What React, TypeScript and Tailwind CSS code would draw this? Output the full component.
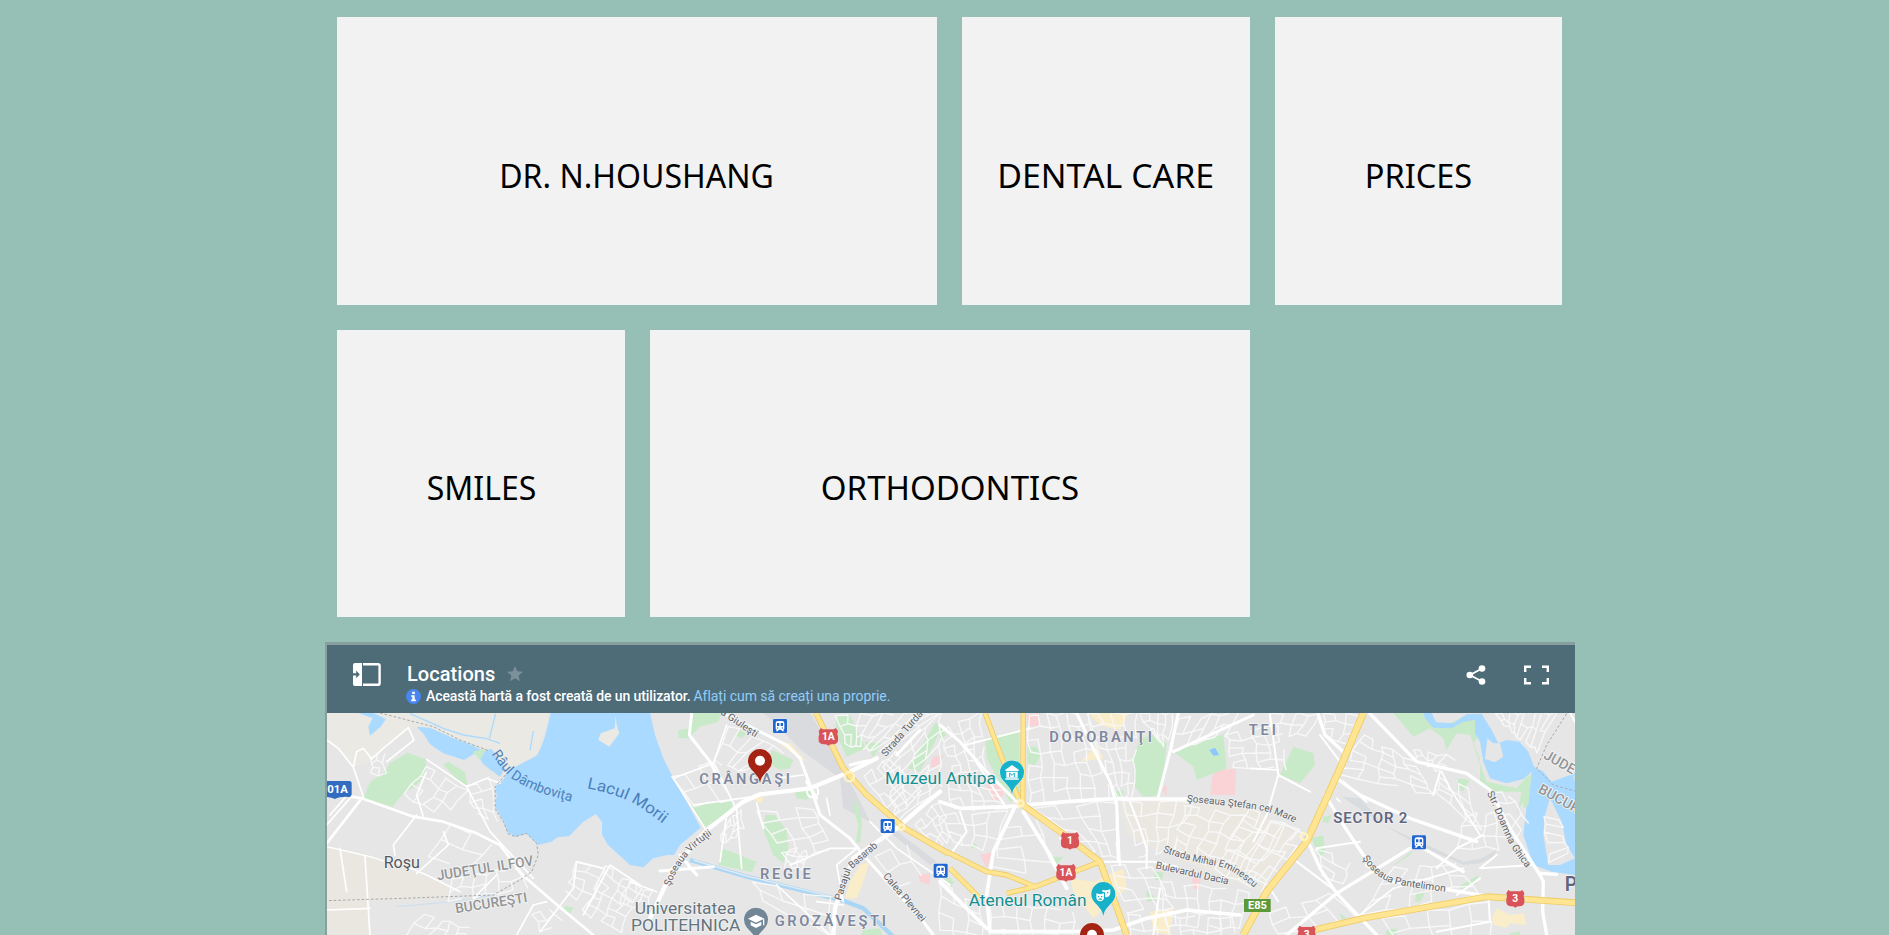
import React from "react";

type Pt = [number, number];
type Quad = [Pt, Pt, Pt, Pt];

const TILE = 930;

const cards = [
  { title: "DR. N.HOUSHANG", box: "col-span-2 h-[288px]", text: "scale-x-[0.97]" },
  { title: "DENTAL CARE", box: "h-[288px]", text: "scale-x-[1.027]" },
  { title: "PRICES", box: "h-[288px]", text: "scale-x-[0.985]" },
  { title: "SMILES", box: "h-[287px]", text: "scale-x-[0.97]" },
  { title: "ORTHODONTICS", box: "col-span-2 h-[287px]", text: "scale-x-100" },
];

/* Street grid spread over a quadrilateral: n streets one way, m the other.
   Crossings are nudged a little and some blocks are merged, as in an old town. */
function streets([a, b, c, d]: Quad, n: number, m: number): string {
  const node = (i: number, j: number): Pt => {
    const u = i / n;
    const v = j / m;
    const x = (1 - v) * (a[0] + (b[0] - a[0]) * u) + v * (d[0] + (c[0] - d[0]) * u);
    const y = (1 - v) * (a[1] + (b[1] - a[1]) * u) + v * (d[1] + (c[1] - d[1]) * u);
    return [Math.round(x + 5 * Math.sin(i * 5.3 + j * 2.1 + a[0])), Math.round(y + 5 * Math.cos(i * 3.7 + j * 4.9 + a[1]))];
  };
  let out = "";
  for (let i = 0; i <= n; i++) {
    for (let j = 0; j <= m; j++) {
      const p = node(i, j);
      if (j < m && (i * 3 + j * 5) % 7 !== 1) {
        const q = node(i, j + 1);
        out += `M${p[0]} ${p[1]}L${q[0]} ${q[1]}`;
      }
      if (i < n && (i * 5 + j * 2) % 4 !== 1) {
        const q = node(i + 1, j);
        out += `M${p[0]} ${p[1]}L${q[0]} ${q[1]}`;
      }
    }
  }
  return out;
}

const grids: { t: number; q: Quad; n: number; m: number }[] = [
  { t: 0, q: [[155, 365], [190, 358], [195, 418], [155, 418]], n: 2, m: 3 },
  { t: 0, q: [[320, 390], [440, 470], [370, 545], [255, 480]], n: 4, m: 3 },
  { t: 0, q: [[440, 455], [510, 430], [530, 560], [470, 540]], n: 2, m: 4 },
  { t: 0, q: [[390, 570], [520, 625], [450, 700], [330, 665]], n: 2, m: 2 },
  { t: 0, q: [[400, 730], [590, 700], [620, 760], [380, 800]], n: 6, m: 2 },
  { t: 0, q: [[310, 840], [450, 880], [430, 920], [260, 900]], n: 5, m: 2 },
  { t: 0, q: [[770, 680], [850, 700], [810, 810], [740, 770]], n: 2, m: 4 },
  { t: 0, q: [[860, 690], [960, 760], [900, 890], [790, 830]], n: 4, m: 6 },
  { t: 0, q: [[640, 840], [690, 820], [720, 860], [660, 890]], n: 2, m: 2 },
  { t: 1, q: [[300, 270], [460, 350], [350, 410], [250, 380]], n: 5, m: 2 },
  { t: 1, q: [[130, 430], [240, 380], [310, 495], [190, 510]], n: 3, m: 2 },
  { t: 1, q: [[290, 560], [335, 530], [340, 600], [270, 625]], n: 4, m: 3 },
  { t: 1, q: [[380, 530], [550, 520], [600, 640], [480, 690]], n: 3, m: 5 },
  { t: 1, q: [[480, 640], [530, 650], [520, 700], [460, 700]], n: 3, m: 3 },
  { t: 1, q: [[620, 240], [930, 234], [760, 350], [650, 330]], n: 9, m: 3 },
  { t: 1, q: [[760, 390], [930, 234], [930, 460], [800, 560]], n: 4, m: 9 },
  { t: 1, q: [[700, 420], [780, 370], [870, 470], [790, 550]], n: 4, m: 4 },
  { t: 1, q: [[850, 570], [930, 500], [960, 600], [930, 640]], n: 4, m: 4 },
  { t: 1, q: [[740, 660], [830, 630], [870, 720], [800, 760]], n: 2, m: 2 },
  { t: 1, q: [[370, 740], [600, 790], [600, 900], [400, 800]], n: 3, m: 2 },
  { t: 1, q: [[0, 740], [70, 770], [40, 830], [-30, 800]], n: 3, m: 3 },
  { t: 2, q: [[0, 290], [120, 234], [135, 400], [40, 420]], n: 4, m: 5 },
  { t: 2, q: [[20, 430], [180, 470], [200, 520], [40, 520]], n: 5, m: 3 },
  { t: 2, q: [[265, 240], [440, 234], [510, 490], [270, 510]], n: 6, m: 7 },
  { t: 2, q: [[440, 234], [590, 234], [580, 480], [530, 490]], n: 4, m: 7 },
  { t: 2, q: [[600, 234], [700, 234], [680, 350], [640, 300]], n: 4, m: 3 },
  { t: 2, q: [[720, 250], [900, 234], [850, 300], [690, 350]], n: 6, m: 2 },
  { t: 2, q: [[860, 300], [1010, 270], [1040, 400], [880, 400]], n: 4, m: 5 },
  { t: 2, q: [[0, 540], [200, 530], [160, 650], [40, 620]], n: 4, m: 3 },
  { t: 2, q: [[190, 580], [290, 560], [350, 720], [160, 700]], n: 2, m: 4 },
  { t: 2, q: [[280, 520], [530, 500], [530, 670], [450, 650]], n: 4, m: 4 },
  { t: 2, q: [[550, 500], [760, 500], [700, 640], [600, 670]], n: 4, m: 4 },
  { t: 2, q: [[740, 510], [1080, 580], [960, 770], [700, 640]], n: 8, m: 5 },
  { t: 2, q: [[510, 690], [640, 700], [700, 820], [560, 830]], n: 3, m: 4 },
  { t: 2, q: [[660, 740], [930, 770], [900, 880], [680, 870]], n: 7, m: 3 },
  { t: 2, q: [[560, 840], [880, 850], [880, 930], [580, 930]], n: 8, m: 2 },
  { t: 2, q: [[150, 800], [400, 830], [400, 930], [150, 930]], n: 6, m: 3 },
  { t: 2, q: [[0, 740], [120, 810], [130, 930], [0, 930]], n: 3, m: 4 },
  { t: 3, q: [[60, 234], [210, 240], [170, 300], [70, 300]], n: 4, m: 2 },
  { t: 3, q: [[220, 234], [330, 240], [290, 330], [225, 300]], n: 3, m: 3 },
  { t: 3, q: [[340, 300], [490, 380], [550, 480], [270, 420]], n: 5, m: 5 },
  { t: 3, q: [[490, 340], [610, 370], [570, 410], [500, 380]], n: 5, m: 2 },
  { t: 3, q: [[570, 430], [650, 460], [690, 590], [560, 470]], n: 3, m: 3 },
  { t: 3, q: [[650, 540], [760, 530], [790, 640], [620, 640]], n: 4, m: 3 },
  { t: 3, q: [[0, 520], [170, 600], [60, 750], [-100, 680]], n: 5, m: 4 },
  { t: 3, q: [[740, 234], [920, 234], [860, 350], [760, 270]], n: 9, m: 2 },
  { t: 3, q: [[430, 700], [620, 690], [690, 780], [330, 840]], n: 5, m: 3 },
  { t: 3, q: [[60, 830], [240, 780], [330, 850], [80, 900]], n: 4, m: 2 },
  { t: 3, q: [[200, 640], [300, 680], [280, 750], [220, 720]], n: 2, m: 3 },
  { t: 3, q: [[880, 540], [930, 560], [955, 660], [900, 680]], n: 1, m: 5 },
  { t: 3, q: [[730, 470], [780, 480], [830, 560], [790, 620]], n: 2, m: 4 },
  { t: 3, q: [[400, 850], [720, 800], [720, 910], [450, 930]], n: 5, m: 2 },
];

function Shift({ t, children }: { t: number; children: React.ReactNode }) {
  return <g transform={`translate(${t * TILE} 0)`}>{children}</g>;
}

function Land() {
  return (
    <>
      <rect x="0" y="220" width="3800" height="700" fill="#e6e6e6" />
      <Shift t={0}>
        <path fill="#ebe9e4" d="M20 234H690L650 360 560 410 520 345 400 310 280 275 200 330 150 380 100 395 20 310Z" />
        <path fill="#eae7e1" d="M20 635 150 665 210 680 290 715 385 750 380 790 150 800 150 900H20Z" />
        <path fill="#c9eac9" d="M130 490 150 440 190 415 210 385 262 353 318 373 318 412 290 450 245 480 218 515ZM370 390 385 380 435 412 442 450 428 450ZM505 405 530 390 535 410ZM735 812 760 818 750 838 728 830Z" />
        <path fill="#aadaff" d="M290 275 330 278 400 310 455 330 483 345 460 358 432 375 370 355 330 328 312 298ZM470 355 515 342 555 400 540 425 490 388ZM115 234H160L198 252 182 275 150 302 145 275 158 250Z" />
        <path fill="#c9eac9" d="M458 350 500 340 480 375Z" />
        <path fill="#aadaff" d="M692 234C684 270 672 330 650 362L562 408 552 432 527 455 530 482 525 515 552 560 562 592 588 605 620 596 655 630 695 620 712 607 748 603 790 560 828 537 846 562 846 598 862 628 930 690 970 697 1000 670 1040 660 1062 660 1080 630 1142 578 1100 500 1060 430 1030 370 1005 300 990 234Z" />
        <path fill="#ebe9e4" d="M887 242 884 280 842 295 835 315 868 335 898 295 890 270Z" />
        <g fill="none" stroke="#aadaff" strokeWidth="4">
          <path d="M270 236 370 280 430 300 500 311 540 325M527 236 508 310M640 288 630 346" />
          <path stroke="#cfe0ec" d="M230 815 400 800 520 780" />
        </g>
      </Shift>
      <Shift t={1}>
        <path fill="#d9dbdf" d="M400 234H540L640 400 720 560 640 520 630 430 520 350 420 250ZM790 580 920 680 900 690 790 600Z" />
        <path fill="#c9eac9" d="M180 234H275L265 260 210 275 175 310 145 310 145 285 175 280ZM325 285 350 295 335 310 315 300ZM425 345 490 375 480 400 450 405 415 385ZM185 512 312 495 300 530 222 578ZM405 540 435 540 470 585 475 640 460 685 430 660 402 590ZM275 640 380 680 365 712 265 690ZM490 460 550 470 530 495 500 490ZM620 240 660 240 708 340 650 365 615 290ZM705 320 755 325 730 368ZM915 265 940 270 870 410 835 400ZM678 490 696 560 690 625 678 620 685 570 670 520Z" />
        <path fill="#faedc9" d="M690 690 718 680 700 740 680 790 645 790 660 740ZM372 490 400 485 395 505 378 502ZM440 320 480 325 530 380 510 370Z" />
        <path fill="#f9d3d5" d="M910 365 940 360 920 400 900 395ZM865 720 900 715 900 750 870 740Z" />
        <path fill="none" stroke="#aad6f5" strokeWidth="13" d="M180 675 350 725 640 797 700 820 790 905" />
        <path fill="none" stroke="#e1eaf0" strokeWidth="4" d="M190 675 350 723 640 793" />
        <path fill="#c9eac9" d="M700 885 750 880 760 910 690 910ZM935 720 965 730 965 760Z" />
      </Shift>
      <Shift t={2}>
        <path fill="#ebe8e2" d="M540 500 760 490 930 520 1080 600 960 770 660 650 560 600Z" />
        <path fill="#faedc9" d="M445 234H565L540 285 480 270ZM390 730 460 740 550 700 560 760 460 850 400 770ZM630 830 700 820 690 900 640 890ZM420 380 470 330 490 370Z" />
        <path fill="#f9d3d5" d="M260 240 300 234 295 275 262 272ZM820 405 888 402 885 480 810 480ZM140 450 185 440 190 480 160 505ZM120 660 160 650 140 700ZM755 720 785 725 775 765 760 760ZM665 460 680 450 680 485Z" />
        <path fill="#c9eac9" d="M135 310 238 285 240 490 210 500 140 370ZM262 335 290 335 302 360 285 390 262 385ZM600 310 640 300 680 325 665 480 610 485 580 450 582 360ZM700 350 850 298 860 400 770 435 760 395ZM335 665 370 665 350 690 335 680ZM620 765 655 795 620 800ZM642 710 672 712 665 735 645 735ZM95 622 112 630 105 642 93 636ZM522 470 550 465 550 490 522 485ZM0 270 18 300 0 315ZM20 735 45 740 30 755Z" />
        <path fill="#8cc8ff" d="M808 345 825 338 838 360 820 362Z" />
      </Shift>
      <Shift t={3}>
        <path fill="#d9dcde" d="M275 485 330 490 400 570 500 615 640 680 690 672 740 645 730 665 690 685 640 690 500 628 410 575Z" />
        <path fill="#c9eac9" d="M90 420 130 335 190 355 195 390 150 445ZM430 234H520L560 280 610 260 650 240 690 240 690 290 670 330 710 440 800 460 835 420 850 430 800 540 815 470 730 470 690 440 690 370 660 300 620 295 590 345 580 310 540 280 490 305ZM625 430 660 435 640 468 620 465ZM220 545 245 540 235 565 218 560ZM185 610 220 600 225 655 205 665ZM430 690 490 645 480 660 430 692ZM500 770 525 775 510 800 495 800ZM625 755 685 720 680 745 640 765ZM410 885 440 880 440 910 405 910ZM270 835 290 850 275 855ZM780 895 810 890 810 910 780 910Z" />
        <path fill="#aadaff" d="M520 234H545L558 262 610 265 650 238 695 236 725 285 745 325 770 315 808 320 835 350 852 395 880 410 905 440 975 415V720L905 710 850 690 820 600 830 510 845 410 820 432 770 445 720 430 700 380 690 320 675 295 675 255 640 260 605 280 550 278 525 250Z" />
        <path fill="#e6e6e6" d="M712 310 730 325 750 325 760 365 735 382 705 372ZM885 540 900 490 935 560 950 630 975 670 930 690 895 690 880 600Z" />
        <path fill="#c9eac9" d="M810 460 845 415 835 510 822 520Z" />
        <path fill="#faedc9" d="M725 850 740 820 780 840 820 835 830 870 780 865 770 878 730 870Z" />
      </Shift>
    </>
  );
}

function Roads() {
  return (
    <>
      <g fill="none" stroke="#f8f8f8" strokeWidth="4" strokeLinecap="round">
        {grids.map((g, i) => (
          <Shift t={g.t} key={i}>
            <path d={streets(g.q, g.n, g.m)} />
          </Shift>
        ))}
      </g>
      <g fill="none" stroke="#fff" strokeLinejoin="round" strokeLinecap="round">
        <Shift t={0}>
          <path strokeWidth="5" d="M20 315 55 340 100 397 130 485M100 397 110 350 130 340 155 372 190 340 265 278 282 315 200 380M20 570 90 490M30 540 75 488M320 373 440 455 510 590 640 730M440 455 500 430 540 445M318 412 290 480 310 545M225 660 220 630 290 540M370 590 385 630 290 715M60 640 80 770M135 665 150 900M20 825 150 820M225 680 320 720 420 770M530 720 460 790M660 890 760 760 770 680 850 700M590 900 640 810 680 800M790 840 870 690 960 750" />
          <path strokeWidth="8" d="M95 485 125 490 280 545 370 560 470 595 540 630 610 722 700 800 820 900M125 490 20 625" />
          <path strokeWidth="4" d="M20 635 150 665 215 685" />
        </Shift>
        <Shift t={1}>
          <path strokeWidth="5" d="M130 430 210 400 250 385 290 270M130 430 225 580M190 510 370 485M250 380 320 525 335 700M380 505 400 580M290 540 270 680M440 430 520 420M600 540 590 490M640 800 620 690 680 640M480 690 600 640 680 640M0 740 80 770M560 800 640 810M440 750 600 900M720 560 800 640 960 750" />
          <path strokeWidth="9" d="M185 234 178 300 240 380 265 430M290 240 470 330 510 370 540 450 570 540 660 610 700 660 880 860 910 900" />
          <path strokeWidth="13" d="M60 850 130 700 225 590 340 500 390 478 540 460 660 410 740 370M610 900 615 820 670 670 800 580 880 510 930 470" />
          <path strokeWidth="9" d="M90 708 250 695M150 660 200 720M530 440 560 490M660 390 700 380 730 375M800 360 870 285" />
          <circle cx="548" cy="470" r="17" strokeWidth="6" />
        </Shift>
        <Shift t={2}>
          <path strokeWidth="6" d="M75 330 270 280M200 520 75 330M570 500 600 580 620 640 620 700M530 490 540 690M480 680 640 680 710 695M60 530 80 590 30 660M440 650 360 610M150 880 140 810M640 900 660 760" />
          <path strokeWidth="9" d="M0 270 60 320 130 400 240 510M700 350 940 240M410 234 450 320 510 440 530 510 535 680M715 234 690 350 655 485" />
          <path strokeWidth="11" d="M0 500 60 520 200 515 380 500 500 492 750 492M225 515 160 650 140 780 150 890 400 890M250 530 330 660 380 760M0 740 140 880M400 890 520 885 620 850 740 825 900 840" />
        </Shift>
        <Shift t={3}>
          <path strokeWidth="6" d="M60 240 85 420 50 540 10 620M85 420 180 470M210 300 270 380M550 480 570 410M280 440 350 500M700 600 620 640 560 700M140 680 260 770M200 640 330 620M620 780 690 730M715 780 720 860 560 890M740 660 690 700 850 690M960 234 975 260" />
          <path strokeWidth="10" d="M360 236 500 380 650 415 720 465 780 580 870 720 880 740 878 830 890 900M870 715 920 718M205 240 225 300 280 350M225 480 280 570 340 660 380 710M170 610 210 700 260 775 380 900M260 775 110 900M260 775 480 640M260 430 330 480 480 550 680 620M520 640 640 710M350 690 430 740 600 765 720 785" />
          <path strokeWidth="5" d="M0 400 85 405M85 800 60 760M330 840 430 760 640 700M270 500 260 490M575 410 600 460 690 600" />
        </Shift>
      </g>
      <g fill="none" strokeLinejoin="round">
        {[
          { c: "#eecb66", w: 0 },
          { c: "#ffe592", w: -5 },
        ].map((s) => (
          <g stroke={s.c} key={s.c}>
            <path strokeWidth={18 + s.w} d="M1488 234 1570 400 1640 480 1755 580 1885 655" />
            <path strokeWidth={16 + s.w} d="M1880 650 2000 710 2060 720 2145 755 2340 680M1890 700 1980 790M2145 755 2060 775M1995 234 2050 380 2095 490M2110 234 2108 505" />
            <path strokeWidth={20 + s.w} d="M2095 500 2220 590 2340 680 2370 760 2420 900" />
            <path strokeWidth={22 + s.w} d="M3130 234 3060 400 2960 620 2840 770 2770 900" />
            <path strokeWidth={20 + s.w} d="M2960 890 3130 850 3500 785 3765 803" />
          </g>
        ))}
      </g>
      <g fill="none" stroke="#fff3c4" strokeWidth="7">
        <circle cx="1588" cy="425" r="14" />
        <circle cx="1745" cy="576" r="8" />
        <circle cx="2102" cy="505" r="9" />
        <circle cx="2952" cy="605" r="10" />
      </g>
      <g fill="none" stroke="#a6a8ab" strokeWidth="3" strokeDasharray="8 6">
        <path d="M180 234 250 252 340 275 420 315 508 348M556 420 526 455 525 520 550 560 565 597 585 605 620 595 650 625 655 660 635 710 600 735 520 780 250 790 20 797" />
        <path d="M3740 236 3680 330 3650 400 3700 450 3765 468" />
      </g>
    </>
  );
}

function Train({ x, y }: { x: number; y: number }) {
  return (
    <g transform={`translate(${x} ${y})`}>
      <rect x="-21" y="-21" width="42" height="42" rx="4" fill="#1f66d0" stroke="#e8eef7" strokeWidth="2" />
      <path fill="#fff" d="M-13-9Q-13-15-6-15H6Q13-15 13-9V8Q13 11 9 11L13 16H7L3 11H-3L-7 16H-13L-9 11Q-13 11-13 8Z" />
      <path fill="#1f66d0" d="M-9-9H-2V0H-9ZM2-9H9V0H2Z" />
      <circle cx="-7" cy="6" r="2" fill="#1f66d0" />
      <circle cx="7" cy="6" r="2" fill="#1f66d0" />
    </g>
  );
}

function Shield({ x, y, wide, label }: { x: number; y: number; wide?: boolean; label: string }) {
  return (
    <g transform={`translate(${x} ${y})`}>
      <path
        transform={wide ? "scale(1.08 1)" : undefined}
        fill="#d95459"
        stroke="#f0dada"
        strokeWidth="2"
        d="M-21 -26L-15 -22H15L21 -26L27 -16Q23 -8 27 0V12Q25 22 13 23Q6 22 0 27Q-6 22 -13 23Q-25 22 -27 12V0Q-23 -8 -27 -16Z"
      />
      <text textAnchor="middle" y="11" fontSize="31" fontWeight="700" fill="#fff">
        {label}
      </text>
    </g>
  );
}

function Pin({ x, y, color }: { x: number; y: number; color: string }) {
  return (
    <path
      transform={`translate(${x} ${y})`}
      fill={color}
      stroke="#f1efef"
      strokeWidth="3"
      d="M0 66C-3 45-14 38-27 23A36 36 0 1 1 27 23C14 38 3 45 0 66Z"
    />
  );
}

function Labels() {
  const fit = { lengthAdjust: "spacingAndGlyphs" } as const;
  return (
    <g fontFamily="Roboto, sans-serif" paintOrder="stroke" strokeLinejoin="round">
      <defs>
        <path id="raul" d="M514 357C545 400 560 425 600 445C650 475 700 485 765 503" />
        <path id="lacul" d="M800 460C880 475 930 495 965 520C1000 545 1010 552 1040 575" />
        <path id="virtutii" d="M1050 755C1065 715 1080 690 1100 665C1125 635 1145 620 1190 590" />
        <path id="stefan" d="M2600 500C2680 508 2760 515 2830 527C2860 535 2890 545 2940 572" />
        <path id="mihai" d="M2528 650C2590 675 2650 685 2700 695C2745 708 2775 735 2810 765" />
        <path id="pantelimon" d="M3127 670C3150 705 3180 730 3210 742C3260 757 3320 762 3400 774" />
        <path id="ghica" d="M3500 475C3525 520 3540 570 3560 610C3580 650 3595 670 3625 705" />
      </defs>

      <g fill="#5f6368" stroke="#f1f1f1" strokeWidth="5" fontSize="30">
        <text><textPath href="#virtutii" textLength="205" {...fit}>Şoseaua Virtuţii</textPath></text>
        <text><textPath href="#stefan" textLength="332" {...fit}>Şoseaua Ştefan cel Mare</textPath></text>
        <text><textPath href="#mihai" textLength="300" {...fit}>Strada Mihai Eminescu</textPath></text>
        <text><textPath href="#pantelimon" textLength="280" {...fit}>Şoseaua Pantelimon</textPath></text>
        <text><textPath href="#ghica" textLength="256" {...fit}>Str. Doamna Ghica</textPath></text>
        <text transform="translate(2506 700) rotate(12.5)" textLength="223" {...fit}>Bulevardul Dacia</text>
        <text transform="translate(1697 367) rotate(-49)" textLength="172" {...fit}>Strada Turda</text>
        <text transform="translate(1200 236) rotate(34)" textLength="128" {...fit}>a Giuleşti</text>
        <text transform="translate(1562 798) rotate(-72)" textLength="100" {...fit}>Pasajul</text>
        <text transform="translate(1596 702) rotate(-41)" textLength="103" {...fit}>Basarab</text>
        <text transform="translate(1688 724) rotate(50)" textLength="180" {...fit}>Calea Plevnei</text>
      </g>

      <g fill="#4d7fb8">
        <text fontSize="42"><textPath href="#raul" textLength="288" {...fit}>Râul Dâmboviţa</textPath></text>
        <text fontSize="48"><textPath href="#lacul" textLength="256" {...fit}>Lacul Morii</textPath></text>
      </g>

      <text x="191" y="699" fontSize="47" fill="#54595f" stroke="#f3f3f3" strokeWidth="5" textLength="109" {...fit}>Roşu</text>
      <g fill="#919496" stroke="#f5f5f5" strokeWidth="5" fontSize="42" fontWeight="500">
        <text transform="translate(353 736) rotate(-9)" textLength="292" {...fit}>JUDEŢUL ILFOV</text>
        <text transform="translate(408 835) rotate(-9)" textLength="218" {...fit}>BUCUREŞTI</text>
        <text transform="translate(3668 369) rotate(29)">JUDEŢUL</text>
        <text transform="translate(3652 471) rotate(29)">BUCUREŞTI</text>
      </g>

      <g fill="#7e879e" stroke="#f5f5f5" strokeWidth="4" fontSize="44" fontWeight="600">
        <text x="1138" y="447" textLength="272">CRÂNGAŞI</text>
        <text x="1320" y="732" textLength="152">REGIE</text>
        <text x="1364" y="873" textLength="334">GROZĂVEŞTI</text>
        <text x="2188" y="320" textLength="308">DOROBANŢI</text>
        <text x="2786" y="300" textLength="82">TEI</text>
      </g>
      <g fill="#5f6680" stroke="#f5f5f5" strokeWidth="4" fontWeight="600">
        <text x="3040" y="564" fontSize="45" textLength="222">SECTOR 2</text>
        <text x="3734" y="767" fontSize="58">P</text>
      </g>

      <g fill="#64747d" stroke="#f3f3f3" strokeWidth="5" fontSize="50">
        <text x="944" y="837" textLength="304" {...fit}>Universitatea</text>
        <text x="933" y="888" textLength="328" {...fit}>POLITEHNICA</text>
      </g>
      <g fill="#148f91" stroke="#f3f3f3" strokeWidth="5" fontSize="50">
        <text x="1695" y="447" textLength="333" {...fit}>Muzeul Antipa</text>
        <text x="1946" y="812" textLength="354" {...fit}>Ateneul Român</text>
      </g>

      <path fill="#316cc1" d="M0 438H88Q95 438 95 445V478Q95 485 88 486Q60 484 45 492Q30 484 0 486Z" />
      <text x="22" y="475" fontSize="30" fontWeight="700" fill="#fff" textLength="62" {...fit}>01A</text>
      <Shield x={1525} y={305} wide label="1A" />
      <Shield x={2250} y={617} label="1" />
      <Shield x={2238} y={713} wide label="1A" />
      <Shield x={3586} y={791} label="3" />
      <Shield x={2960} y={898} label="3" />
      <rect x="2772" y="792" width="80" height="39" fill="#5c9939" />
      <text x="2784" y="823" fontSize="31" fontWeight="700" fill="#fff" textLength="57" {...fit}>E85</text>

      <Train x={1380} y={273} />
      <Train x={1703} y={573} />
      <Train x={1862} y={707} />
      <Train x={3297} y={622} />

      <Pin x={1308} y={855} color="#728795" />
      <path fill="#fff" d="M1284 851 1308 839 1333 851 1308 863ZM1292 860 1308 868 1324 860V871L1308 879 1292 871ZM1329 853H1333V871H1329Z" />
      <Pin x={2076} y={413} color="#17b1c9" />
      <path fill="#fff" d="M2056 404 2076 390 2096 404V408H2056ZM2059 410H2093V428H2059ZM2056 430H2096V434H2056Z" />
      <path fill="none" stroke="#17b1c9" strokeWidth="3" d="M2069 426V414L2076 421 2083 414V426" />
      <Pin x={2350} y={778} color="#17b1c9" />
      <path fill="#fff" d="M2329 775Q2341 780 2352 775V787Q2352 798 2341 799 2329 798 2329 787ZM2347 764Q2359 768 2371 762V775Q2370 784 2360 787 2355 787 2355 783V772L2347 770Z" />
      <path fill="#17b1c9" d="M2334 783H2338V787H2334ZM2343 783H2347V787H2343ZM2361 771H2365V775H2361ZM2336 792Q2341 788 2346 792V794H2336Z" />
      <Pin x={1320} y={379} color="#a52312" />
      <circle cx="1320" cy="377" r="15" fill="#fff" />
      <Pin x={2316} y={901} color="#a52312" />
      <circle cx="2316" cy="899" r="15" fill="#fff" />
    </g>
  );
}

function CityMap() {
  return (
    <svg className="block h-[222px] w-[1248px]" viewBox="21 234 3744 666" preserveAspectRatio="none">
      <Land />
      <Roads />
      <Labels />
    </svg>
  );
}

function MapHeader() {
  return (
    <header className="flex h-[68px] items-start bg-[#4e6b78] font-[Roboto,sans-serif]">
      <svg className="mt-[17px] ml-[26px] h-[25px] w-[28px]" viewBox="0 0 28 25">
        <path fill="#fff" d="M2 1H9V24H2Q0 24 0 22V3Q0 1 2 1Z" />
        <path fill="#4e6b78" d="M0 11.2H3.2V8.6L6.8 12.4 3.2 16.2V13.6H0Z" />
        <path fill="none" stroke="#fff" strokeWidth="2.4" d="M10 2.2H25Q26.6 2.2 26.6 3.8V21.2Q26.6 22.8 25 22.8H10" />
      </svg>
      <div className="ml-[25px] flex flex-col pt-[17px]">
        <div className="flex h-6 items-center gap-[12px]">
          <h2 className="ml-[1px] text-[20px] leading-6 font-medium tracking-[0.05px] text-white">Locations</h2>
          <svg className="h-4 w-4" viewBox="0 0 24 24">
            <path fill="#7b909b" d="M12 18.3 19.4 23 17.4 14.4 24 8.6 15.4 7.9 12 0 8.6 7.9 0 8.6 6.6 14.4 4.6 23Z" />
          </svg>
        </div>
        <div className="flex h-[21px] items-center text-[14px] leading-[21px]">
          <svg className="mr-[5px] h-[15px] w-[15px]" viewBox="0 0 15 15">
            <circle cx="7.5" cy="7.5" r="7.5" fill="#4a86f0" />
            <path fill="#fff" d="M6.2 2.8H8.8V5H6.2ZM5.2 6.2H8.7V10.6H9.8V12.2H5.2V10.6H6.3V7.7H5.2Z" />
          </svg>
          <span className="w-[267.5px] font-medium tracking-[-0.1px] whitespace-nowrap text-white">Această hartă a fost creată de un utilizator.</span>
          <a className="tracking-[-0.04px] whitespace-nowrap text-[#93cdf8]">Aflați cum să creați una proprie.</a>
        </div>
      </div>
      <div className="mt-[19px] mr-[26px] ml-auto flex items-center gap-[38px]">
        <svg className="h-[22px] w-5" viewBox="0 0 20 22">
          <path fill="none" stroke="#fff" strokeWidth="1.8" d="M16 4.5 4 11 16 17.5" />
          <circle cx="3.8" cy="11" r="3.3" fill="#fff" />
          <circle cx="16" cy="4.5" r="3.3" fill="#fff" />
          <circle cx="16" cy="17.5" r="3.3" fill="#fff" />
        </svg>
        <svg className="h-[22px] w-[25px]" viewBox="0 0 25 22">
          <path fill="none" stroke="#fff" strokeWidth="2.4" d="M7 2.7H1.2V8M18 2.7H23.8V8M1.2 14V19.3H7M23.8 14V19.3H18" />
        </svg>
      </div>
    </header>
  );
}

export default function App() {
  return (
    <main className="h-[935px] overflow-hidden bg-[#96bfb6]">
      <section className="ml-[337px] grid w-[1225px] grid-cols-[288px_287px_288px_287px] gap-x-[25px] gap-y-[25px] pt-[17px]">
        {cards.map((card) => (
          <article key={card.title} className={`flex items-center justify-center bg-[#f2f2f2] ${card.box}`}>
            <h1 className={`mt-[29px] font-['Noto_Sans',sans-serif] text-[33px] leading-10 font-normal whitespace-nowrap text-black ${card.text}`}>
              {card.title}
            </h1>
          </article>
        ))}
      </section>
      <section className="mt-[25px] ml-[325px] w-[1250px] border-t-[3px] border-l-2 border-[#879f9f]">
        <MapHeader />
        <CityMap />
      </section>
    </main>
  );
}
